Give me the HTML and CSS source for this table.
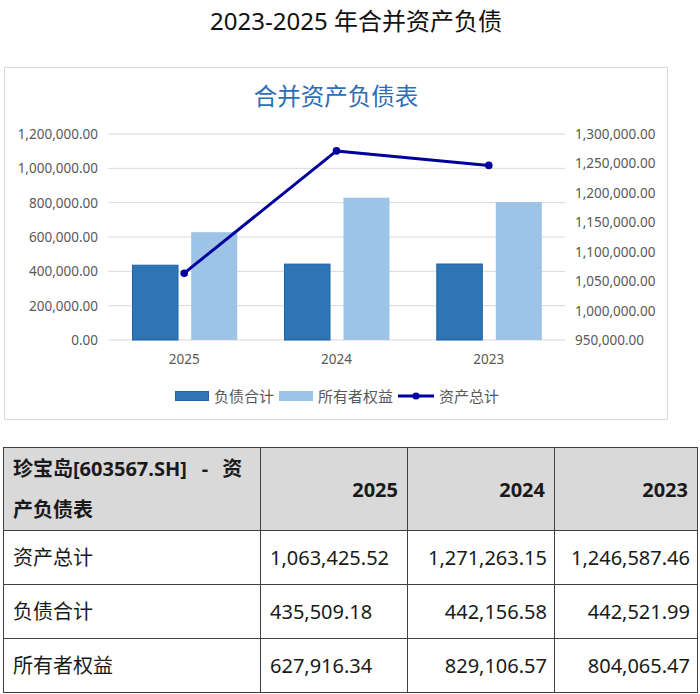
FILE: index.html
```html
<!DOCTYPE html>
<html lang="zh-CN">
<head>
<meta charset="utf-8">
<title>2023-2025 年合并资产负债</title>
<link rel="stylesheet" href="styles.css">
</head>
<body>
<h1 class="page-title">2023-2025 年合并资产负债</h1>

<section class="chart-box">
  <div class="chart-title">合并资产负债表</div>
  <svg class="chart-svg" width="662" height="264" viewBox="5 124 662 264" xmlns="http://www.w3.org/2000/svg">
    <g class="grid">
      <line x1="108" y1="134" x2="565" y2="134"/>
      <line x1="108" y1="168.33" x2="565" y2="168.33"/>
      <line x1="108" y1="202.67" x2="565" y2="202.67"/>
      <line x1="108" y1="237" x2="565" y2="237"/>
      <line x1="108" y1="271.33" x2="565" y2="271.33"/>
      <line x1="108" y1="305.67" x2="565" y2="305.67"/>
      <line x1="108" y1="340" x2="565" y2="340"/>
    </g>
    <g class="axis-left">
      <text x="98" y="134">1,200,000.00</text>
      <text x="98" y="168.33">1,000,000.00</text>
      <text x="98" y="202.67">800,000.00</text>
      <text x="98" y="237">600,000.00</text>
      <text x="98" y="271.33">400,000.00</text>
      <text x="98" y="305.67">200,000.00</text>
      <text x="98" y="340">0.00</text>
    </g>
    <g class="axis-right">
      <text x="575" y="134">1,300,000.00</text>
      <text x="575" y="163.43">1,250,000.00</text>
      <text x="575" y="192.86">1,200,000.00</text>
      <text x="575" y="222.29">1,150,000.00</text>
      <text x="575" y="251.71">1,100,000.00</text>
      <text x="575" y="281.14">1,050,000.00</text>
      <text x="575" y="310.57">1,000,000.00</text>
      <text x="575" y="340">950,000.00</text>
    </g>
    <g class="bars-dark">
      <rect x="132.5" y="265.2" width="45.5" height="74.8"/>
      <rect x="284.5" y="264.1" width="45.5" height="75.9"/>
      <rect x="436.8" y="264.0" width="45.5" height="76.0"/>
    </g>
    <g class="bars-light">
      <rect x="191.2" y="232.2" width="46" height="107.8"/>
      <rect x="343.5" y="197.7" width="46" height="142.3"/>
      <rect x="495.8" y="202.0" width="46" height="138.0"/>
    </g>
    <polyline class="total-line" points="184.2,273.2 336.5,150.9 488.8,165.4"/>
    <g class="markers">
      <circle cx="184.2" cy="273.2" r="3.8"/>
      <circle cx="336.5" cy="150.9" r="3.8"/>
      <circle cx="488.8" cy="165.4" r="3.8"/>
    </g>
    <g class="axis-x">
      <text x="184.2" y="359">2025</text>
      <text x="336.5" y="359">2024</text>
      <text x="488.8" y="359">2023</text>
    </g>
  </svg>
  <div class="legend">
    <span class="swatch swatch-dark"></span><span class="legend-label">负债合计</span>
    <span class="swatch swatch-light"></span><span class="legend-label">所有者权益</span>
    <svg class="legend-line" width="36" height="10" viewBox="0 0 36 10"><line x1="0" y1="5" x2="36" y2="5"/><circle cx="18" cy="5" r="3.6"/></svg><span class="legend-label">资产总计</span>
  </div>
</section>

<table class="data-table">
  <colgroup>
    <col class="c-name"><col class="c-y1"><col class="c-y2"><col class="c-y3">
  </colgroup>
  <thead>
    <tr>
      <th class="name-head">珍宝岛[603567.SH]<span class="dash">-</span>资<br>产负债表</th>
      <th class="num">2025</th>
      <th class="num">2024</th>
      <th class="num">2023</th>
    </tr>
  </thead>
  <tbody>
    <tr><td>资产总计</td><td class="first">1,063,425.52</td><td class="num">1,271,263.15</td><td class="num">1,246,587.46</td></tr>
    <tr><td>负债合计</td><td class="first">435,509.18</td><td class="num">442,156.58</td><td class="num">442,521.99</td></tr>
    <tr><td>所有者权益</td><td class="first">627,916.34</td><td class="num">829,106.57</td><td class="num">804,065.47</td></tr>
  </tbody>
</table>
</body>
</html>
```

FILE: styles.css
```css
html, body {
  margin: 0;
  padding: 0;
  background: #ffffff;
}

body {
  font-family: "Noto Sans", "Noto Sans CJK SC", sans-serif;
  color: #111111;
  width: 700px;
}

.page-title {
  margin: 0;
  height: 42px;
  line-height: 42px;
  font-size: 24px;
  font-weight: 400;
  text-align: center;
  padding-left: 12px;
  color: #111111;
}

.chart-box {
  margin: 25px 0 0 4px;
  width: 662px;
  border: 1px solid #d9d9d9;
  padding-bottom: 15px;
}

.chart-title {
  height: 56px;
  line-height: 56px;
  text-align: center;
  font-size: 23.5px;
  color: #2e6db4;
}

.chart-svg {
  display: block;
}

.grid line {
  stroke: #d9d9d9;
  stroke-width: 1;
}

.axis-left text,
.axis-right text,
.axis-x text {
  font-family: "Noto Sans", "Noto Sans CJK SC", sans-serif;
  font-size: 13.5px;
  fill: #595959;
  dominant-baseline: central;
}

.axis-left text { text-anchor: end; }
.axis-right text { text-anchor: start; }
.axis-x text { text-anchor: middle; }

.bars-dark rect {
  fill: #2e75b6;
  stroke: #1f63a6;
  stroke-width: 1;
}

.bars-light rect {
  fill: #9dc3e6;
}

.total-line {
  fill: none;
  stroke: #00009c;
  stroke-width: 3;
  stroke-linejoin: round;
}

.markers circle {
  fill: #00009c;
}

.legend {
  height: 16px;
  display: flex;
  align-items: center;
  justify-content: center;
  gap: 5px;
  font-size: 15px;
  color: #595959;
  padding-left: 2px;
}

.swatch {
  display: inline-block;
  width: 34px;
  height: 10px;
}

.swatch-dark {
  background: #2e75b6;
  box-shadow: inset 0 0 0 1px #1f63a6;
}

.swatch-light {
  background: #9dc3e6;
}

.legend-label {
  line-height: 16px;
  white-space: nowrap;
}

.legend-line line {
  stroke: #00009c;
  stroke-width: 3;
}

.legend-line circle {
  fill: #00009c;
}

.data-table {
  margin: 27px 0 0 3px;
  width: 694px;
  border-collapse: collapse;
  table-layout: fixed;
  font-size: 20px;
  color: #1a1a1a;
}

.c-name { width: 257px; }
.c-y1 { width: 147px; }
.c-y2 { width: 147px; }
.c-y3 { width: 143px; }

.data-table th,
.data-table td {
  border: 1px solid #404040;
  padding: 0 7px 0 9px;
  white-space: nowrap;
}

.data-table thead th {
  background: #d9d9d9;
  font-weight: 700;
  height: 81px;
  line-height: 41px;
}

.data-table th.name-head {
  text-align: left;
}

.dash {
  padding: 0 14px 0 15px;
}

.data-table th.num {
  text-align: right;
  padding-right: 9px;
}

.data-table tbody td {
  height: 53px;
  line-height: 28px;
  text-align: left;
}

.data-table td.first {
  text-align: left;
}

.data-table td.num {
  text-align: right;
}
```
